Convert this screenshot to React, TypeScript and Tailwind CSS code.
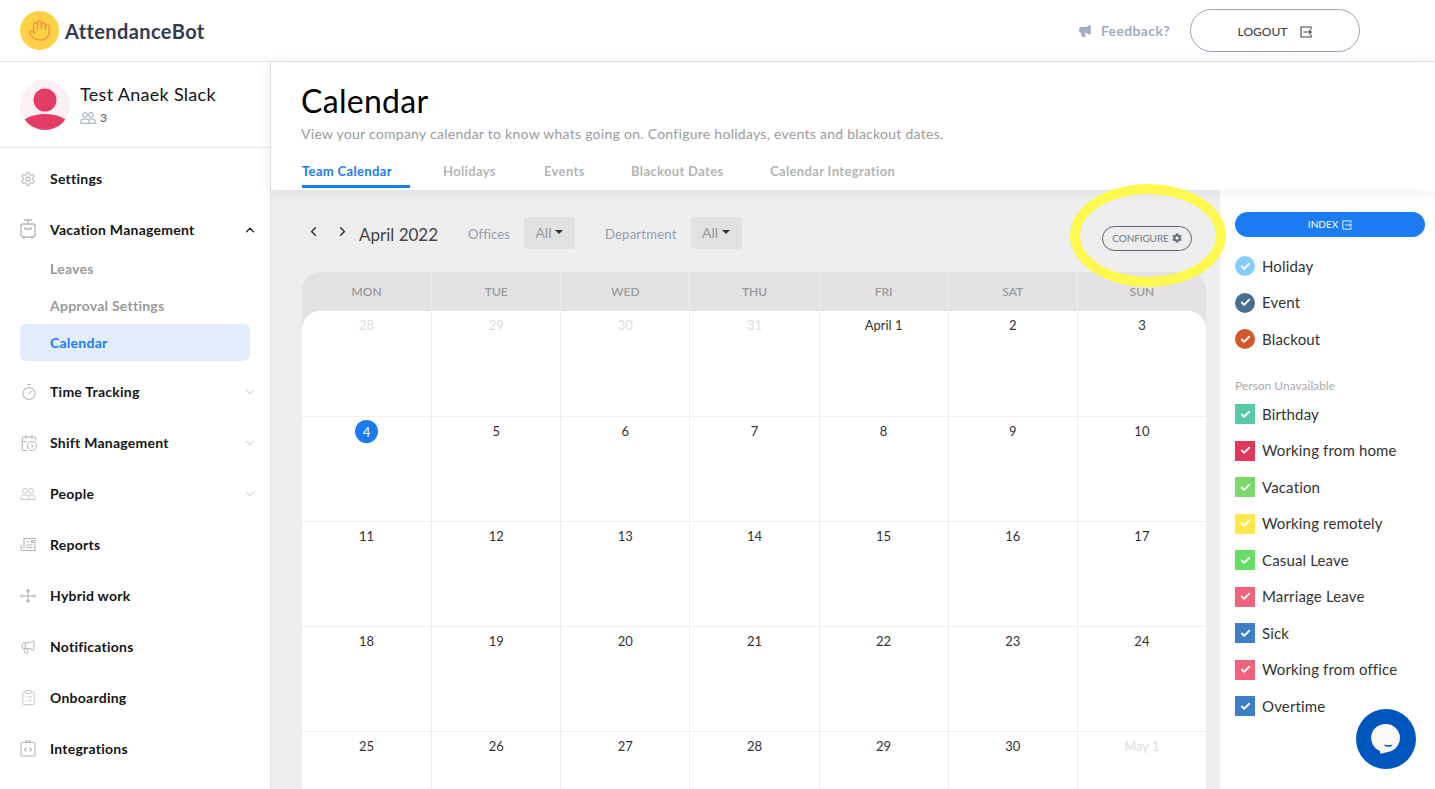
import { ChevronDown, ChevronLeft, ChevronRight, ChevronUp, Check, Settings, Timer, CalendarClock, Megaphone, ClipboardList, Hand } from "lucide-react";
import { FaCog } from "react-icons/fa";
import type { ReactNode } from "react";

const font = "font-['Lato','Noto_Sans',sans-serif]";

const LuggageIcon = () => (
  <svg width="16" height="21" viewBox="0 0 16 21" fill="none" stroke="#b5b5b5" strokeWidth="1.3">
    <rect x="1" y="5" width="14" height="13" rx="2" />
    <path d="M4 1h8M8 1v4M5 8v2h6V8M4 18v2M12 18v2" />
  </svg>
);

const ReportsIcon = () => (
  <svg width="16" height="16" viewBox="0 0 16 16" fill="none" stroke="#b5b5b5" strokeWidth="1.1">
    <path d="M4 12V1.5h11v12H2.5A1.5 1.5 0 0 1 1 12V8" />
    <path d="M6.5 5h3M6.5 8h6M6.5 10.500h6M11.500 3.500h1.500v2h-1.500z" />
  </svg>
);

const HybridIcon = () => (
  <svg width="16" height="14" viewBox="0 0 16 14" fill="none" stroke="#b5b5b5" strokeWidth="1">
    <circle cx="1.800" cy="7" r="1.300" />
    <circle cx="14.200" cy="7" r="1.300" />
    <path d="M3 7h10M8 3v8" />
    <circle cx="8" cy="1.800" r="1.200" fill="#b5b5b5" />
    <circle cx="8" cy="12" r="1.200" fill="#b5b5b5" />
  </svg>
);

const CodeIcon = () => (
  <svg width="16" height="17" viewBox="0 0 16 17" fill="none" stroke="#b5b5b5" strokeWidth="1.1">
    <rect x="1" y="2.500" width="14" height="13.500" rx="1.500" />
    <path d="M5.500 2.500V1h5v1.500M6.500 7.500l-2 2 2 2M9.500 7.500l2 2-2 2" />
  </svg>
);

const PeopleIcon = ({ color, size }: { color: string; size: number }) => (
  <svg width={size} height={size * 0.75} viewBox="0 0 16 12" fill="none" stroke={color} strokeWidth="1">
    <circle cx="5" cy="2.800" r="2.300" />
    <circle cx="11" cy="2.800" r="2.300" />
    <path d="M.8 11.300V9.500a2.500 2.500 0 0 1 2.500-2.500h3.400a2.500 2.500 0 0 1 2.500 2.500v1.800z" />
    <path d="M9 7h3.700a2.500 2.500 0 0 1 2.500 2.500v1.800H9.200" />
  </svg>
);

const ExitBoxIcon = ({ size, color }: { size: number; color: string }) => (
  <svg width={size} height={size} viewBox="0 0 12 12" fill="none" stroke={color} strokeWidth="1.100">
    <path d="M11 3.500V1H1v10h10V8.500" />
    <path d="M3.500 6H11.500M9 3.800L11.300 6 9 8.200" />
  </svg>
);

const Avatar = () => (
  <svg width="50" height="50" viewBox="0 0 50 50" className="shrink-0">
    <clipPath id="avatar-clip">
      <circle cx="25" cy="25" r="25" />
    </clipPath>
    <circle cx="25" cy="25" r="25" fill="#fcf0f4" />
    <g clipPath="url(#avatar-clip)" fill="#e43c64">
      <circle cx="25" cy="20" r="11.500" />
      <ellipse cx="25" cy="46" rx="24" ry="12" />
    </g>
  </svg>
);

const NavItem = ({ icon, label, chevron }: { icon: ReactNode; label: string; chevron?: "up" | "down" }) => (
  <div className="flex h-[51px] items-center pl-5 pr-[13px]">
    <div className="flex w-[30px] shrink-0 items-center">{icon}</div>
    <span className="flex-1 text-[14px] font-bold tracking-[0.25px] text-[#151515]">{label}</span>
    {chevron === "up" && <ChevronUp size={14} strokeWidth={2.200} className="text-[#222]" />}
    {chevron === "down" && <ChevronDown size={14} strokeWidth={1.500} className="text-[#bbb]" />}
  </div>
);

const Sidebar = () => (
  <aside className="w-[271px] shrink-0 border-r border-[#e3e3e3] bg-white">
    <div className="flex h-[86px] items-center gap-[10px] border-b border-[#e3e3e3] pl-5">
      <Avatar />
      <div className="mb-[2px]">
        <div className="text-[18px] leading-[24px] tracking-[0.3px] text-[#151515]">Test Anaek Slack</div>
        <div className="flex items-center gap-1 pt-[4px] text-[12px] leading-4 text-[#555]">
          <PeopleIcon color="#98a2b8" size={16} />3
        </div>
      </div>
    </div>
    <div className="pt-[5px]">
      <NavItem icon={<Settings size={16} strokeWidth={2} className="text-[#c0c0c0]" />} label="Settings" />
      <NavItem icon={<LuggageIcon />} label="Vacation Management" chevron="up" />
      <div className="-mt-[5px] flex flex-col text-[14px] font-bold tracking-[0.25px]">
        <div className="flex h-[37px] items-center pl-[50px] text-[#999]">Leaves</div>
        <div className="flex h-[37px] items-center pl-[50px] text-[#999]">Approval Settings</div>
        <div className="mx-5 flex h-[37px] items-center rounded-md bg-[#e2edfb] pl-[30px] text-[#1a7bf2]">Calendar</div>
      </div>
      <div className="pt-[5px]">
        <NavItem icon={<Timer size={18} strokeWidth={1.400} className="text-[#b5b5b5]" />} label="Time Tracking" chevron="down" />
        <NavItem icon={<CalendarClock size={18} strokeWidth={1.400} className="text-[#b5b5b5]" />} label="Shift Management" chevron="down" />
        <NavItem icon={<PeopleIcon color="#c4c4c4" size={16} />} label="People" chevron="down" />
        <NavItem icon={<ReportsIcon />} label="Reports" />
        <NavItem icon={<HybridIcon />} label="Hybrid work" />
        <NavItem icon={<Megaphone size={16} strokeWidth={1.500} className="text-[#b5b5b5]" />} label="Notifications" />
        <NavItem icon={<ClipboardList size={17} strokeWidth={1.100} className="text-[#b5b5b5]" />} label="Onboarding" />
        <NavItem icon={<CodeIcon />} label="Integrations" />
      </div>
    </div>
  </aside>
);

const tabs = [
  { label: "Holidays", width: "w-[101px]" },
  { label: "Events", width: "w-[87px]" },
  { label: "Blackout Dates", width: "w-[139px]" },
  { label: "Calendar Integration", width: "w-[140px]" },
];

const PageHeader = () => (
  <div className="relative z-10 h-[128px] bg-white pl-[30px] shadow-[0_2px_14px_rgba(0,0,0,0.07)]">
    <h1 className="pt-[20px] text-[32px] leading-[38px] font-normal tracking-[0.3px] text-black">Calendar</h1>
    <p className="pt-[4px] text-[14px] leading-5 tracking-[0.27px] text-[#9b9b9b]">View your company calendar to know whats going on. Configure holidays, events and blackout dates.</p>
    <div className="flex pt-[17px] pl-[1px] text-[13px] font-bold tracking-[0.35px] text-[#b5b5b5]">
      <div className="mr-[33px] h-[27px] w-[108px] border-b-[3px] border-[#1a7bf2] leading-[20px] text-[#1a7bf2]">Team Calendar</div>
      {tabs.map((t) => (
        <div key={t.label} className={`${t.width} leading-[20px]`}>
          {t.label}
        </div>
      ))}
    </div>
  </div>
);

const AllSelect = () => (
  <div className="flex h-[32px] w-[51px] items-center justify-center gap-1 rounded bg-[#e2e2e2] pb-[2px] text-[14px] text-[#999]">
    All
    <span className="mt-[-1px] h-0 w-0 border-x-4 border-t-4 border-x-transparent border-t-[#333]" />
  </div>
);

const Toolbar = () => (
  <div className="flex h-[82px] items-center pt-[4px] pr-[15px]">
    <ChevronLeft size={15} strokeWidth={2.500} className="ml-[4px] mt-[-4px] text-[#333]" />
    <ChevronRight size={15} strokeWidth={2.500} className="ml-[14px] mt-[-4px] text-[#333]" />
    <span className="ml-[9px] mt-[3px] text-[17px] text-[#444]">April 2022</span>
    <span className="ml-[30px] mr-[14px] mt-[3px] text-[13px] tracking-[0.1px] text-[#949cb2]">Offices</span>
    <AllSelect />
    <span className="ml-[30px] mr-[14px] mt-[3px] text-[13px] tracking-[0.25px] text-[#949cb2]">Department</span>
    <AllSelect />
    <div className="ml-auto mt-[10px] flex h-[25px] w-[90px] items-center justify-center gap-[3px] rounded-full border border-[#5a6578] text-[10px] tracking-[-0.1px] text-[#6d7686]">
      CONFIGURE
      <FaCog size={10} />
    </div>
  </div>
);

const days = ["MON", "TUE", "WED", "THU", "FRI", "SAT", "SUN"];

const weeks: { label: string; muted?: boolean; today?: boolean }[][] = [
  [{ label: "28", muted: true }, { label: "29", muted: true }, { label: "30", muted: true }, { label: "31", muted: true }, { label: "April 1" }, { label: "2" }, { label: "3" }],
  [{ label: "4", today: true }, { label: "5" }, { label: "6" }, { label: "7" }, { label: "8" }, { label: "9" }, { label: "10" }],
  [{ label: "11" }, { label: "12" }, { label: "13" }, { label: "14" }, { label: "15" }, { label: "16" }, { label: "17" }],
  [{ label: "18" }, { label: "19" }, { label: "20" }, { label: "21" }, { label: "22" }, { label: "23" }, { label: "24" }],
  [{ label: "25" }, { label: "26" }, { label: "27" }, { label: "28" }, { label: "29" }, { label: "30" }, { label: "May 1", muted: true }],
];

const CalendarGrid = () => (
  <div className="mr-px rounded-t-[18px] bg-[#e4e2e5]">
    <div className="grid h-[39px] grid-cols-7">
      {days.map((d) => (
        <div key={d} className="flex items-center justify-center border-l border-[#eeeeee] text-[12px] font-semibold text-[#9b9b9b] first:border-l-0">
          {d}
        </div>
      ))}
    </div>
    <div className="overflow-hidden rounded-t-[18px] bg-white">
      {weeks.map((week, i) => (
        <div key={i} className={`grid grid-cols-7 border-b border-[#eeeeee] ${i === 0 ? "h-[106px]" : "h-[105px]"}`}>
          {week.map((cell) => (
            <div key={cell.label} className="flex justify-center border-l border-[#eeeeee] pt-[4px] text-[13px] leading-5 text-[#333] first:border-l-0">
              {cell.today ? (
                <span className="mt-[-1px] flex h-[23px] w-[23px] items-center justify-center rounded-full bg-[#1a7bf2] text-white">{cell.label}</span>
              ) : (
                <span className={cell.muted ? "text-[#dddddd]" : ""}>{cell.label}</span>
              )}
            </div>
          ))}
        </div>
      ))}
    </div>
  </div>
);

const eventLegend = [
  { label: "Holiday", color: "bg-[#87cdfb]" },
  { label: "Event", color: "bg-[#4a6f8f]" },
  { label: "Blackout", color: "bg-[#d2592b]" },
];

const personLegend = [
  { label: "Birthday", color: "bg-[#57c9a9]" },
  { label: "Working from home", color: "bg-[#e2375d]" },
  { label: "Vacation", color: "bg-[#7cd86a]" },
  { label: "Working remotely", color: "bg-[#ffe74c]" },
  { label: "Casual Leave", color: "bg-[#66dd66]" },
  { label: "Marriage Leave", color: "bg-[#f1627c]" },
  { label: "Sick", color: "bg-[#3d7fc6]" },
  { label: "Working from office", color: "bg-[#f1627c]" },
  { label: "Overtime", color: "bg-[#3d7fc6]" },
];

const LegendRow = ({ label, color, round }: { label: string; color: string; round?: boolean }) => (
  <div className="flex h-[36.500px] items-center gap-[7px] text-[15px] tracking-[0.15px] text-[#333]">
    <span className={`flex h-5 w-5 items-center justify-center ${color} ${round ? "rounded-full" : ""}`}>
      <Check size={11} strokeWidth={4} className="text-white" />
    </span>
    {label}
  </div>
);

const Legend = () => (
  <div className="w-[215px] shrink-0 bg-white pl-[15px] pr-[10px] pt-[22px]">
    <div className="flex h-[25px] items-center justify-center gap-1 rounded-full bg-[#1a7bf2] text-[10px] text-white">
      INDEX
      <ExitBoxIcon size={10} color="#ffffff" />
    </div>
    <div className="pt-[10.750px]">
      {eventLegend.map((e) => (
        <LegendRow key={e.label} {...e} round />
      ))}
    </div>
    <div className="pt-[20.500px] pb-[2px] text-[12px] leading-4 text-[#aaaaaa]">Person Unavailable</div>
    {personLegend.map((e) => (
      <LegendRow key={e.label} {...e} />
    ))}
  </div>
);

export default function App() {
  return (
    <div className={`${font} relative h-[789px] w-full overflow-hidden bg-white`}>
      <header className="flex h-[62px] items-center border-b border-[#e3e3e3] bg-white pl-5 pr-[75px]">
        <span className="flex h-[39px] w-[39px] items-center justify-center rounded-full bg-[#ffd147]">
          <Hand size={23} strokeWidth={1.300} className="text-[#f0894a]" />
        </span>
        <span className="ml-[6px] text-[20px] font-bold tracking-[0.4px] text-[#333a52]">AttendanceBot</span>
        <div className="ml-auto flex items-center gap-[9px] text-[14px] font-bold tracking-[0.35px] text-[#a3acc0]">
          <Megaphone size={14} fill="currentColor" />
          Feedback?
        </div>
        <div className="ml-5 flex h-[43px] w-[170px] items-center justify-center gap-[13px] rounded-full border border-[#9aa3b5] pt-[3px] text-[12px] font-medium text-[#444]">
          LOGOUT
          <ExitBoxIcon size={12} color="#444444" />
        </div>
      </header>
      <div className="flex h-[727px]">
        <Sidebar />
        <main className="flex min-w-0 flex-1 flex-col">
          <PageHeader />
          <div className="flex min-h-0 flex-1">
            <div className="min-w-0 flex-1 bg-[#eeeeee] pl-[31px] pr-[13px]">
              <Toolbar />
              <CalendarGrid />
            </div>
            <Legend />
          </div>
        </main>
      </div>

      {/* annotation drawn over the screenshot */}
      <div className="absolute left-[1070px] top-[184px] z-20 h-[103px] w-[156px] rounded-[50%] border-[10px] border-[#fff84f]" />

      {/* chat launcher */}
      <div className="absolute left-[1356px] top-[709px] z-20 flex h-[60px] w-[60px] items-center justify-center rounded-full bg-[#0056bf]">
        <svg width="30" height="32" viewBox="0 0 30 32">
          <path d="M15 1a14 14 0 0 1 4 27.400c-3 .8-5.500 1-8.500 2.100L9 30.500V28A14 14 0 0 1 15 1z" fill="#faf9f8" />
          <path d="M13 21.500c2.500 1 6 1 8.500 0-.5 1.500-2 2.300-4.200 2.300s-3.800-.8-4.300-2.300z" fill="#0056bf" />
        </svg>
      </div>
    </div>
  );
}
